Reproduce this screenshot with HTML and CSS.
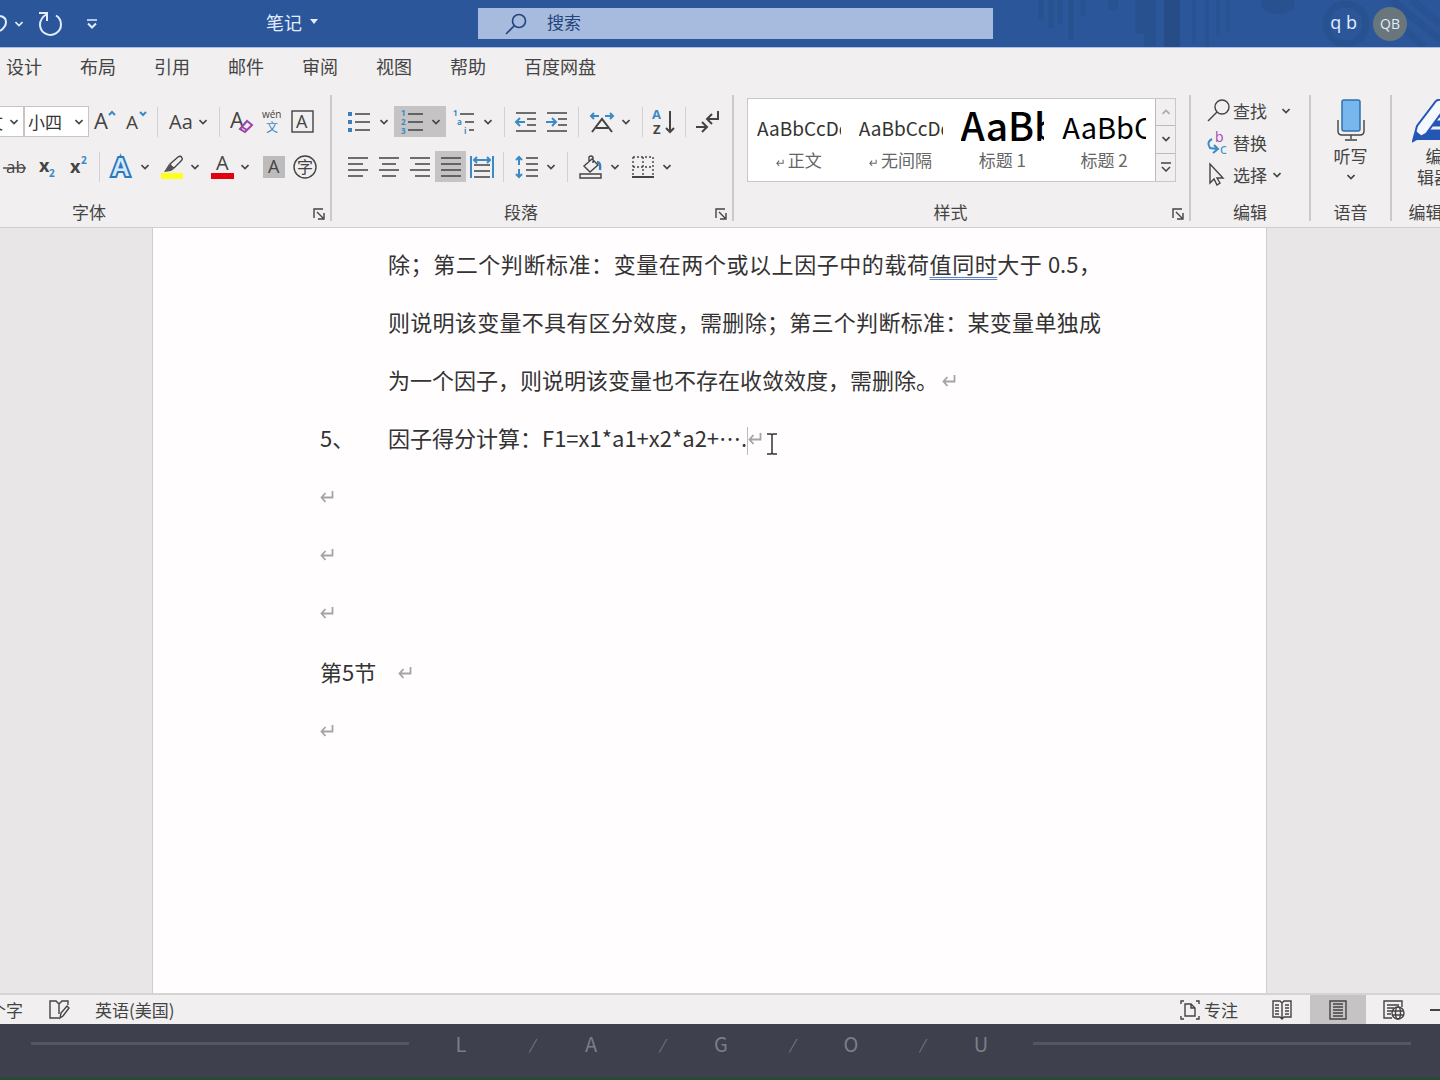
FILE: index.html
```html
<!DOCTYPE html>
<html lang="zh-CN">
<head>
<meta charset="utf-8">
<meta name="viewport" content="width=device-width, initial-scale=1">
<title>笔记</title>
<link rel="stylesheet" href="styles.css">
</head>
<body>
<svg class="defs" aria-hidden="true">
  <symbol id="chev" viewBox="0 0 8 6"><path d="M0.5 1L4 4.5L7.500 1" fill="none" stroke="currentColor" stroke-width="1.600"/></symbol>
  <symbol id="mark" viewBox="0 0 14 12"><path d="M12.500 0V6.500H1.500M5.500 2L1.500 6.500L5.500 11" fill="none" stroke="currentColor" stroke-width="1.800"/></symbol>
  <symbol id="launch" viewBox="0 0 12 12"><path d="M1 10V1H10M4 4L10 10M11 5V11H5" fill="none" stroke="currentColor" stroke-width="1.400"/></symbol>
</svg>

<header class="titlebar">
  <svg class="circuit" viewBox="0 0 440 47" aria-hidden="true">
    <g fill="none" stroke="#264c86">
      <path d="M41 0V20M51 0V28M60 0V24M71 0V40M83 0V16" stroke-width="5" opacity=".5"/>
      <path d="M113 0V10" stroke-width="10" opacity=".4"/>
      <path d="M141 0V34M150 0V47" stroke-width="12" opacity=".5"/>
      <path d="M172 0V47" stroke-width="16" opacity=".9"/>
      <path d="M194 0V44M207 0V47M218 0V36M228 0V32" stroke-width="4" opacity=".4"/>
      <path d="M262 0V8Q277 20 294 8V0" fill="#264c86" opacity=".5"/>
      <circle cx="346" cy="24" r="20" stroke-width="7" opacity=".5"/>
      <path d="M392 0L440 40M412 0L440 24M396 22L424 47" stroke-width="7" opacity=".4"/>
    </g>
  </svg>
  <div class="quick">
    <button class="undo" aria-label="撤消"><svg width="7" height="24" viewBox="0 0 7 24"><path d="M0 4Q6 5 6 10Q6 15 0 19" fill="none" stroke="currentColor" stroke-width="2"/></svg></button>
    <button class="undo-more" aria-label="撤消列表"><svg class="chev"><use href="#chev"/></svg></button>
    <button aria-label="重复"><svg width="24" height="26" viewBox="0 0 24 26"><path d="M0 2H8V10M8 3Q1 7 1 14A10.500 10.500 0 1 0 17 4.500" fill="none" stroke="currentColor" stroke-width="2"/></svg></button>
    <button class="customize" aria-label="自定义快速访问工具栏"><svg width="10" height="10" viewBox="0 0 10 10"><path d="M0 1H10" stroke="currentColor" stroke-width="1.500"/><path d="M1 4.500L5 8.500L9 4.500" fill="none" stroke="currentColor" stroke-width="2"/></svg></button>
    <button class="docname">笔记 <svg width="8" height="5" viewBox="0 0 8 5"><path d="M0 0H8L4 5Z" fill="currentColor"/></svg></button>
  </div>
  <label class="search">
    <svg width="22" height="22" viewBox="0 0 22 22"><g fill="none" stroke="#24457c" stroke-width="1.600"><circle cx="14" cy="8" r="6.500"/><path d="M9.500 12.500L1 21"/></g></svg>
    <input type="text" placeholder="搜索" aria-label="搜索">
  </label>
  <div class="account"><span>q b</span><button class="avatar">QB</button></div>
</header>

<nav class="tabs">
  <a href="#design">设计</a><a href="#layout">布局</a><a href="#refs">引用</a><a href="#mail">邮件</a><a href="#review">审阅</a><a href="#view">视图</a><a href="#help">帮助</a><a href="#netdisk">百度网盘</a>
</nav>

<div class="ribbon">
  <section class="group font">
    <div class="row">
      <span class="combo name"><select aria-label="字体"><option>文</option></select><svg class="chev"><use href="#chev"/></svg></span>
      <span class="combo size"><select aria-label="字号"><option>小四</option></select><svg class="chev"><use href="#chev"/></svg></span>
      <button class="tool" aria-label="增大字号"><svg class="ic"><text x="1" y="19" font-size="22">A</text><path class="b" d="M16 5L19 2L22 5"/></svg></button>
      <button class="tool" aria-label="减小字号"><svg class="ic"><text x="2" y="19" font-size="19">A</text><path class="b" d="M16 2L19 5L22 2"/></svg></button>
      <i class="sep"></i>
      <button class="tool split" aria-label="更改大小写"><svg class="ic"><text x="0" y="19" font-size="20">Aa</text></svg><svg class="chev"><use href="#chev"/></svg></button>
      <i class="sep"></i>
      <button class="tool" aria-label="清除格式"><svg class="ic"><text x="1" y="18" font-size="22">A</text><path d="M11 19L18 11L23 15L16 22Z" fill="#f1efef" stroke="#9b45ab" stroke-width="2"/><path d="M13 17L18 20" stroke="#9b45ab" stroke-width="2"/></svg></button>
      <button class="tool" aria-label="拼音指南"><svg class="ic"><text x="2" y="8" font-size="10">wén</text><text x="6" y="22" font-size="12" fill="#3a8ac6">文</text></svg></button>
      <button class="tool" aria-label="字符边框"><svg class="ic"><rect class="l" x="1" y="1" width="21" height="21"/><text x="5" y="18" font-size="18">A</text></svg></button>
    </div>
    <div class="row">
      <button class="tool" aria-label="删除线"><svg class="ic"><text x="2" y="18" font-size="17">ab</text><path class="l" d="M-1 13H22"/></svg></button>
      <button class="tool" aria-label="下标"><svg class="ic"><text x="4" y="17" font-size="18" font-weight="700">x</text><text x="14" y="22" font-size="10" font-weight="700" fill="#3a8ac6">2</text></svg></button>
      <button class="tool" aria-label="上标"><svg class="ic"><text x="4" y="18" font-size="18" font-weight="700">x</text><text x="15" y="9" font-size="10" font-weight="700" fill="#3a8ac6">2</text></svg></button>
      <i class="sep"></i>
      <button class="tool split" aria-label="文本效果"><svg class="ic"><text x="1" y="21" font-size="26" font-weight="600" fill="#d5e9fa" stroke="#2b78be" stroke-width="4" paint-order="stroke">A</text></svg><svg class="chev"><use href="#chev"/></svg></button>
      <button class="tool split" aria-label="突出显示"><svg class="ic"><rect y="18" width="22" height="6" fill="#ffff1e"/><path class="l" d="M9 9L17 2Q20 0 21 3Q22 4 20 6L13 13Q10 12 9 9Z"/><path d="M8 9L13 14L10 16L3 17Z" fill="#555"/></svg><svg class="chev"><use href="#chev"/></svg></button>
      <button class="tool split" aria-label="字体颜色"><svg class="ic"><rect width="23" y="18" height="6" fill="#e3000f"/><text x="5" y="15" font-size="20">A</text></svg><svg class="chev"><use href="#chev"/></svg></button>
      <button class="tool last" aria-label="字符底纹"><svg class="ic"><rect x="1" y="1" width="22" height="22" fill="#bdbbbb"/><text x="6" y="18" font-size="18">A</text></svg></button>
      <button class="tool" aria-label="带圈字符"><svg class="ic"><circle class="l" cx="12" cy="12" r="11"/><text x="4" y="18" font-size="16">字</text></svg></button>
    </div>
    <footer><h2>字体</h2><button class="launch" aria-label="字体设置"><svg width="12" height="12"><use href="#launch"/></svg></button></footer>
  </section>

  <section class="group para">
    <div class="row">
      <button class="tool split" aria-label="项目符号"><svg class="ic"><path class="l" d="M7 4H22M7 12H22M7 20H22"/><path d="M0 2H4V6H0ZM0 10H4V14H0ZM0 18H4V22H0Z" fill="#3a7ebc"/></svg><svg class="chev"><use href="#chev"/></svg></button>
      <button class="tool split on" aria-label="编号"><svg class="ic"><path class="l" d="M8 4H23M8 12H23M8 20H23"/><g font-size="8" font-weight="700" fill="#3a8ac6"><text x="1" y="6">1</text><text x="1" y="15">2</text><text x="1" y="24">3</text></g></svg><svg class="chev"><use href="#chev"/></svg></button>
      <button class="tool split" aria-label="多级列表"><svg class="ic"><path class="l" d="M8 4H22M13 12H22M17 20H22"/><g font-size="8" font-weight="700" fill="#3a8ac6"><text x="1" y="6">1</text><text x="5" y="15">a</text><text x="12" y="24">i</text></g></svg><svg class="chev"><use href="#chev"/></svg></button>
      <i class="sep"></i>
      <button class="tool" aria-label="减少缩进"><svg class="ic"><path class="l" d="M2 3H22M13 9H22M13 15H22M2 21H22"/><path class="b" d="M11 12H3M6 8L2 12L6 16"/></svg></button>
      <button class="tool" aria-label="增加缩进"><svg class="ic"><path class="l" d="M2 3H22M13 9H22M13 15H22M2 21H22"/><path class="b" d="M1 12H10M7 8L11 12L7 16"/></svg></button>
      <i class="sep"></i>
      <button class="tool split" aria-label="中文版式"><svg class="ic"><path class="l2" d="M2 22L12 9L22 22M6 18H18"/><path class="b" d="M1 6H9M4 3L1 6L4 9M15 6H23M20 3L23 6L20 9"/></svg><svg class="chev"><use href="#chev"/></svg></button>
      <i class="sep"></i>
      <button class="tool" aria-label="排序"><svg class="ic"><text x="0" y="9" font-size="13" font-weight="700" fill="#3a8ac6">A</text><text x="1" y="24" font-size="13" font-weight="700">Z</text><path class="l2" d="M18 1V22M14 18L18 22L22 18"/></svg></button>
      <i class="sep"></i>
      <button class="tool" aria-label="显示编辑标记"><svg class="ic"><path class="l2" d="M23 1V9H13M17 4L12 9L17 14M1 17H12M7 12L12 17L7 22"/></svg></button>
    </div>
    <div class="row">
      <button class="tool" aria-label="左对齐"><svg class="ic"><path class="l" d="M2 3H22M2 9H17M2 15H22M2 21H17"/></svg></button>
      <button class="tool" aria-label="居中"><svg class="ic"><path class="l" d="M2 3H22M5 9H19M2 15H22M5 21H19"/></svg></button>
      <button class="tool" aria-label="右对齐"><svg class="ic"><path class="l" d="M2 3H22M7 9H22M2 15H22M7 21H22"/></svg></button>
      <button class="tool on" aria-label="两端对齐"><svg class="ic"><path class="l" d="M2 3H22M2 9H22M2 15H22M2 21H22"/></svg></button>
      <button class="tool" aria-label="分散对齐"><svg class="ic"><path class="l" d="M4 10H20M4 16H20M4 22H20"/><path class="b" d="M1 1V23M23 1V23M4 5H20M7 2L4 5L7 8M17 2L20 5L17 8"/></svg></button>
      <i class="sep"></i>
      <button class="tool split" aria-label="行距"><svg class="ic"><path class="l" d="M11 3H23M11 9H23M11 15H23M11 21H23"/><path class="b" d="M4 2V10M1 5L4 2L7 5M4 14V22M1 19L4 22L7 19"/></svg><svg class="chev"><use href="#chev"/></svg></button>
      <i class="sep"></i>
      <button class="tool split" aria-label="底纹"><svg class="ic"><path class="l" d="M5 11L13 4L19 10L11 17ZM10 7V2Q12 0 14 2V8M1 19H22V23H1Z"/><path d="M18 7Q22 7 21 15" fill="none" stroke="#3a7ebc" stroke-width="2.500"/></svg><svg class="chev"><use href="#chev"/></svg></button>
      <button class="tool split" aria-label="边框"><svg class="ic"><path class="l" stroke-dasharray="2 2" d="M2 2H22M2 2V21M22 2V21M12 2V21M2 12H22"/><path class="l2" d="M1 22H23"/></svg><svg class="chev"><use href="#chev"/></svg></button>
    </div>
    <footer><h2>段落</h2><button class="launch" aria-label="段落设置"><svg width="12" height="12"><use href="#launch"/></svg></button></footer>
  </section>

  <section class="group styles">
    <div class="gallery">
      <button class="style"><span class="sample">AaBbCcDd</span><span class="cap"><svg width="8" height="8" viewBox="0 0 14 12"><use href="#mark"/></svg> 正文</span></button>
      <button class="style"><span class="sample">AaBbCcDd</span><span class="cap"><svg width="8" height="8" viewBox="0 0 14 12"><use href="#mark"/></svg> 无间隔</span></button>
      <button class="style"><span class="sample h1">AaBb</span><span class="cap">标题 1</span></button>
      <button class="style"><span class="sample h2">AaBbC</span><span class="cap">标题 2</span></button>
      <div class="scroller">
        <button class="off" aria-label="向上"><svg class="chev flip"><use href="#chev"/></svg></button>
        <button aria-label="向下"><svg class="chev"><use href="#chev"/></svg></button>
        <button aria-label="更多"><svg width="10" height="10" viewBox="0 0 10 10"><path d="M0 1H10M1 5L5 9L9 5" fill="none" stroke="currentColor" stroke-width="1.500"/></svg></button>
      </div>
    </div>
    <footer><h2>样式</h2><button class="launch" aria-label="样式窗格"><svg width="12" height="12"><use href="#launch"/></svg></button></footer>
  </section>

  <section class="group edit">
    <div class="stack">
      <button><svg class="ic"><g class="l"><circle cx="15" cy="8" r="7"/><path d="M10 13L1 22"/></g></svg>查找<svg class="chev far"><use href="#chev"/></svg></button>
      <button><svg class="ic"><text x="8" y="11" font-size="14" fill="#a347b5">b</text><text x="13" y="23" font-size="14" fill="#3a8ac6">c</text><path class="b" d="M5 8Q-1 11 3 17L10 18M7 14L11 18L6 22"/></svg>替换</button>
      <button><svg class="ic"><path class="l" d="M3 1V20L7 16L10 22L13 20L10 15H16Z"/></svg>选择<svg class="chev"><use href="#chev"/></svg></button>
    </div>
    <footer><h2>编辑</h2></footer>
  </section>

  <section class="group voice">
    <button class="big"><svg width="28" height="44" viewBox="0 0 28 44"><rect x="5" y="1" width="18" height="31" rx="2" fill="#78b7ee" stroke="#2f71ae" stroke-width="1.500"/><path class="l" d="M1 21V32Q1 36 5 36H23Q27 36 27 32V21M14 36V40M8 41H20"/></svg><span>听写</span><svg class="chev"><use href="#chev"/></svg></button>
    <footer><h2>语音</h2></footer>
  </section>

  <section class="group editor">
    <button class="big"><svg width="44" height="44" viewBox="0 0 44 44"><path d="M10 28H44V41H1Z" fill="#2456b8"/><path d="M22 12H44V28H18Z" fill="#2456b8"/><path d="M22 20H44M16 29H44" stroke="#f1efef" stroke-width="3"/><path d="M1 42L5 27L24 2Q28 -1 33 3Q35 6 33 9L14 35Z" fill="#f6f8ff" stroke="#2456b8" stroke-width="2"/><path d="M1 42L4 32L10 37Z" fill="#2456b8"/></svg><span>编<br>辑器</span></button>
    <footer><h2>编辑器</h2></footer>
  </section>
</div>

<main class="canvas">
  <article class="page">
    <p class="hang">除；第二个判断标准：变量在两个或以上因子中的载荷<u>值同时</u>大于 0.5，则说明该变量不具有区分效度，需删除；第三个判断标准：某变量单独成为一个因子，则说明该变量也不存在收敛效度，需删除。<svg class="mark"><use href="#mark"/></svg></p>
    <p class="item"><span class="num">5、</span><span>因子得分计算：F1=x1*a1+x2*a2+….<i class="caret"></i><svg class="mark"><use href="#mark"/></svg><svg class="ibeam" viewBox="0 0 10 22"><path d="M0 1H4L5 2L6 1H10M5 2V20M0 21H4L5 20L6 21H10" fill="none" stroke="#333" stroke-width="1.500"/></svg></span></p>
    <p><svg class="mark"><use href="#mark"/></svg></p>
    <p><svg class="mark"><use href="#mark"/></svg></p>
    <p><svg class="mark"><use href="#mark"/></svg></p>
    <p class="section">第5节<svg class="mark"><use href="#mark"/></svg></p>
    <p><svg class="mark"><use href="#mark"/></svg></p>
  </article>
</main>

<div class="status">
  <span class="words"><span>个字</span></span>
  <button aria-label="校对"><svg width="22" height="20" viewBox="0 0 22 20"><path class="l" d="M10 18H1V1H7L10 4L13 1H19V5M10 4V14"/><path class="l" d="M11 18L12 13L18 6L20 8L14 16Z"/></svg></button>
  <button class="lang">英语(美国)</button>
  <button class="focus"><svg width="20" height="20" viewBox="0 0 20 20"><path class="l" d="M4 1H1V4M16 1H19V4M1 16V19H4M19 16V19H16M5 4H11L15 8V16H5ZM11 4V8H15"/></svg>专注</button>
  <button class="view" aria-label="阅读视图"><svg width="20" height="20" viewBox="0 0 20 20"><path class="l" d="M10 3L8 1H1V17H8L10 19L12 17H19V1H12ZM10 3V18"/><path class="l" d="M3 5H7M3 8H7M3 11H7M3 14H7M13 5H17M13 8H17M13 11H17M13 14H17"/></svg></button>
  <button class="view on" aria-label="页面视图"><svg width="18" height="20" viewBox="0 0 18 20"><path class="l" d="M1 1H17V19H1ZM4 4H14M4 7H14M4 10H14M4 13H14M4 16H14"/></svg></button>
  <button class="view" aria-label="Web 版式"><svg width="22" height="20" viewBox="0 0 22 20"><path class="l" d="M9 18H1V1H19V7M4 5H16M4 8H11M4 11H9M4 14H8"/><g class="l"><circle cx="15" cy="13" r="6"/><ellipse cx="15" cy="13" rx="2.500" ry="6"/><path d="M9 11H21M9 15H21"/></g></svg></button>
  <button class="minus" aria-label="缩小"><svg width="10" height="2" viewBox="0 0 10 2"><path d="M0 1H10" stroke="currentColor" stroke-width="2"/></svg></button>
</div>

<footer class="brand">
  <hr>
  <div class="letters"><span>L</span><i>/</i><span>A</span><i>/</i><span>G</span><i>/</i><span>O</span><i>/</i><span>U</span></div>
  <hr>
</footer>
</body>
</html>
```
FILE: styles.css
```css
* { box-sizing: border-box; }

body {
  margin: 0;
  min-height: 100vh;
  display: flex;
  flex-direction: column;
  overflow: hidden;
  background: #f1efef;
  color: #444;
  font-family: "Noto Sans CJK SC", sans-serif;
  font-size: 17px;
  line-height: 24px;
}

button {
  display: flex;
  align-items: center;
  justify-content: center;
  flex: none;
  margin: 0;
  padding: 0;
  border: 0;
  background: none;
  color: inherit;
  font: inherit;
}

svg { flex: none; }
.defs { position: absolute; width: 0; height: 0; }
.chev { width: 8px; height: 6px; }
.flip { transform: rotate(180deg); }
.ic { width: 24px; height: 24px; overflow: visible; }
.ic text { fill: #444; font-family: "Open Sans", "Noto Sans CJK SC", sans-serif; }
.ic text[fill], .ic g[fill] text { fill: revert-layer; }
.l, .l2, .b { fill: none; stroke: #444; stroke-width: 1.4px; }
.l2 { stroke-width: 2px; }
.b { stroke: #3a8ac6; stroke-width: 2px; }

/* Title bar */
.titlebar {
  position: relative;
  display: grid;
  grid-template-columns: 478fr 515fr 447fr;
  align-items: center;
  height: 47px;
  background: #2b579a;
  color: #e3edff;
}
.circuit { position: absolute; top: 0; right: 0; width: 440px; height: 47px; }
.quick { display: flex; align-items: center; }
.undo-more { width: 24px; }
.quick button:nth-child(3) { margin-left: 8px; }
.customize { margin-left: 24px; }
.docname { gap: 8px; margin: 0 160px 0 auto; padding-bottom: 4px; font-size: 18px; }
.search {
  display: flex;
  align-items: center;
  gap: 20px;
  height: 31px;
  padding-left: 27px;
  background: #a6bbdd;
  position: relative;
}
.search input {
  flex: 1;
  min-width: 0;
  padding: 0 0 4px;
  border: 0;
  outline: 0;
  background: none;
  font: inherit;
}
.search input::placeholder { color: #24457c; opacity: 1; }
.account {
  display: flex;
  align-items: center;
  justify-content: flex-end;
  gap: 16px;
  padding-right: 33px;
  position: relative;
  font-family: "Open Sans", sans-serif;
  font-size: 18px;
}
.account span { padding-bottom: 4px; }
.avatar {
  width: 34px;
  height: 34px;
  border-radius: 50%;
  background: #69767c;
  font-size: 14px;
}

/* Tabs */
.tabs {
  display: flex;
  gap: 38px;
  padding: 6px 6px 8px;
  border-top: 1px solid #a9bfe6;
  font-size: 18px;
}
.tabs a { color: #444; text-decoration: none; }

/* Ribbon */
.ribbon {
  display: flex;
  height: 142px;
  padding-top: 9px;
  border-bottom: 1px solid #cfcdcd;
}
.group {
  display: flex;
  flex-direction: column;
  flex: none;
  position: relative;
  height: 126px;
  border-right: 2px solid #cbc9c9;
}
.font { width: 332px; }
.para { width: 402px; padding-left: 10px; }
.styles { flex: 1; min-width: 0; padding-left: 13px; }
.edit { width: 120px; }
.voice { width: 81px; }
.editor { width: 48px; border: 0; overflow: hidden; }

.row { display: flex; align-items: center; height: 31px; margin-top: 11px; }
.row + .row { margin-top: 14px; }
.font .row { width: 320px; }
.tool { width: 31px; height: 31px; }
.split { width: 52px; gap: 8px; }
.font .split { width: 50px; gap: 6px; }
.last { margin-left: auto; }
.on { background: #c5c3c3; }
.sep { width: 12px; height: 30px; background: linear-gradient(#d2d0d0, #d2d0d0) center / 1px 100% no-repeat; }

.combo {
  display: grid;
  flex: none;
  align-items: center;
  justify-content: end;
  height: 31px;
  overflow: hidden;
}
.combo select, .combo svg { grid-area: 1 / 1; }
.combo svg { justify-self: end; margin-right: 6px; pointer-events: none; }
.combo select {
  appearance: none;
  height: 31px;
  padding: 0 0 0 3px;
  border: 1px solid #c6c4c4;
  border-radius: 0;
  background: #fff;
  color: #333;
  font: inherit;
}
.name { width: 24px; }
.name select { width: 42px; }
.size { width: 65px; }
.size select { width: 65px; }

.group footer { display: flex; align-items: center; height: 24px; margin-top: auto; margin-bottom: -3px; }
.group h2 { flex: 1; margin: 0; font-size: 17px; font-weight: 400; text-align: center; }
.launch { width: 22px; padding-top: 4px; }
.font h2 { padding-right: 130px; }
.para footer { margin-left: -10px; }
.styles footer { margin-left: -13px; }

.gallery {
  display: flex;
  height: 84px;
  margin: 3px 13px 0 0;
  border: 1px solid #c9c7c7;
  background: #fff;
}
.style {
  flex: 1;
  flex-direction: column;
  min-width: 0;
  padding: 0 9px;
  overflow: hidden;
}
.sample {
  width: 100%;
  height: 48px;
  overflow: hidden;
  color: #333;
  font-size: 19px;
  line-height: 56px;
  text-align: left;
  white-space: nowrap;
}
.sample.h1 { color: #000; font-size: 39px; font-weight: 500; line-height: 48px; }
.sample.h2 { color: #000; font-size: 29px; line-height: 52px; }
.cap { height: 32px; color: #666; white-space: nowrap; }
.scroller { display: grid; grid-template-rows: 1fr 1fr 1fr; width: 20px; }
.scroller button { border: 1px solid #bcbaba; border-width: 0 0 1px 1px; background: #f1efef; }
.scroller button:last-child { border-bottom: 0; }
.scroller .off { color: #aaa; }

.stack { display: flex; flex-direction: column; align-items: flex-start; padding-left: 16px; }
.stack button { gap: 2px; height: 32px; }
.stack .chev { margin-left: 4px; }
.stack .far { margin-left: 13px; }
.big { flex-direction: column; margin-top: 4px; }
.big span { line-height: 21px; margin: 2px 0 8px; }
.editor .big, .editor footer { width: 84px; }

/* Document */
.canvas {
  display: flex;
  flex: 1;
  padding: 0 173px 0 152px;
  background: #e8e6e7;
}
.page {
  flex: 1;
  padding: 6px 165px 0 167px;
  border: 1px solid #cfcdce;
  border-width: 0 1px;
  background: #fffdfe;
  color: #333;
  font-size: 22px;
  line-height: 58px;
}
.page p { margin: 0; height: 58px; text-align: justify; }
.page .hang { height: auto; margin-left: 68px; }
.page .item { display: flex; }
.num { width: 68px; }
.page .section { margin-top: 2px; }
.page u { text-decoration: underline double #5b82c8 1px; text-underline-offset: 4px; }
.mark { width: 14px; height: 12px; color: #a5a3a4; vertical-align: 2px; }
.hang .mark { margin-left: 4px; }
.section .mark { margin-left: 22px; }
.caret { display: inline-block; width: 1px; height: 28px; background: #bbb; vertical-align: middle; }
.ibeam { width: 10px; height: 22px; margin-left: 5px; vertical-align: -8px; }

/* Status bar */
.status {
  display: flex;
  align-items: center;
  height: 31px;
  border-top: 2px solid #d5d3d3;
}
.words { display: flex; justify-content: flex-end; width: 23px; overflow: hidden; white-space: nowrap; }
.status .words + button { margin-left: 26px; }
.lang { margin-left: 24px; }
.focus { gap: 4px; margin-left: auto; margin-right: 16px; }
.view { width: 56px; height: 29px; }
.minus { width: 18px; justify-content: flex-end; overflow: hidden; }

/* Brand strip */
.brand {
  display: grid;
  grid-template-columns: 377fr 584fr 377fr;
  align-items: center;
  gap: 20px;
  height: 56px;
  padding: 0 29px 14px 31px;
  border-bottom: 3px solid #2a4a38;
  background: #3e404d;
}
.brand hr { width: 100%; height: 3px; margin: 0; border: 0; background: #545763; }
.letters {
  display: grid;
  grid-template-columns: repeat(9, 1fr);
  color: #7b7e89;
  font-size: 20px;
  text-align: center;
}
.letters i { padding-left: 12px; font-size: 14px; }
```
